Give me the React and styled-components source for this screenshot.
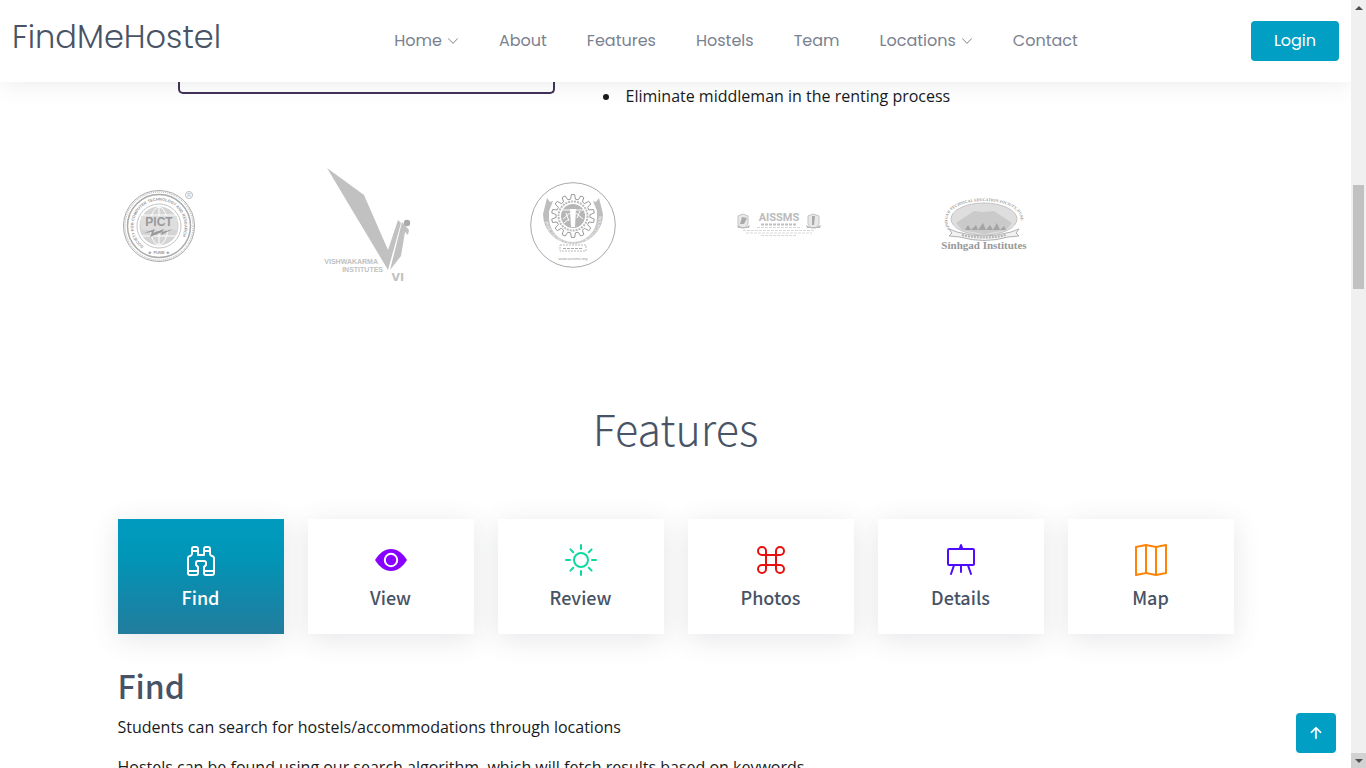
import React from 'react';
import styled, { createGlobalStyle } from 'styled-components';
import {
  BsArrowUpShort,
  BsBinoculars,
  BsBrightnessHigh,
  BsChevronDown,
  BsCommand,
  BsEasel,
  BsMap,
} from 'react-icons/bs';

const brand = '#009fc3';
const heading = '#485366';
const display = '"Poppins", "Inter", "Liberation Sans", sans-serif';
const title = '"Noto Sans CJK SC", "Open Sans", sans-serif';

const GlobalStyle = createGlobalStyle`
  *, *::before, *::after { box-sizing: border-box; }
  body {
    margin: 0;
    background: #fff;
    color: #181a1d;
    font: 400 16px/24px "Open Sans", "Noto Sans", sans-serif;
  }
`;

const Screen = styled.div`
  display: flex;
  height: 100vh;
  overflow: hidden;
`;

const Page = styled.div`
  position: relative;
  flex: 1;
  min-width: 0;
  overflow: hidden;
`;

const Header = styled.header`
  position: relative;
  z-index: 2;
  display: flex;
  align-items: center;
  justify-content: space-between;
  height: 82px;
  padding: 0 12px;
  background: #fff;
  box-shadow: 0 0 24px rgba(72, 86, 84, 0.12);
  font-family: ${display};
`;

const Brand = styled.a`
  padding-bottom: 8px;
  color: ${heading};
  font-size: 32px;
  font-weight: 300;
  line-height: 40px;
  text-decoration: none;
`;

const Nav = styled.nav`
  display: flex;
  gap: 40px;
`;

const NavLink = styled.a`
  display: flex;
  align-items: center;
  gap: 5px;
  color: #7a8290;
  text-decoration: none;
`;

const LoginButton = styled.button`
  width: 88px;
  height: 40px;
  border: 0;
  border-radius: 4px;
  background: ${brand};
  color: #fff;
  font: inherit;
`;

const Container = styled.div`
  max-width: 1140px;
  margin: 0 auto;
  padding: 0 12px;
`;

const About = styled.section`
  display: flex;
  align-items: flex-start;
  gap: 39px;
  padding-left: 60px;
`;

const AboutFrame = styled.div`
  width: 377px;
  height: 12px;
  border: 2px solid #41305a;
  border-top: 0;
  border-radius: 0 0 5px 5px;
`;

const AboutList = styled.ul`
  margin: 0;
  padding: 2px 0 0 27px;

  li { padding-left: 5px; }
`;

const Clients = styled.section`
  display: flex;
  align-items: center;
  gap: 120px;
  padding: 60px 0 117px;
`;

const ClientLogo = styled.svg`
  flex: none;
  overflow: visible;
`;

const SectionTitle = styled.h2`
  margin: 0;
  color: ${heading};
  font: 300 43px/58px ${title};
  text-align: center;
`;

const Tabs = styled.div`
  display: grid;
  grid-template-columns: repeat(6, 1fr);
  gap: 24px;
  padding-top: 63px;
`;

const Tab = styled.button`
  display: flex;
  flex-direction: column;
  align-items: center;
  gap: 9px;
  height: 115px;
  padding: 25px 0 0;
  border: 0;
  background: ${(p) => (p.$active ? 'linear-gradient(180deg, #009bbf 0%, #0096b8 30%, #227c9d 100%)' : '#fff')};
  box-shadow: 0 5px 26px rgba(68, 80, 94, 0.14);
  color: ${(p) => (p.$active ? '#fff' : heading)};
  font: 500 18px/24px ${title};

  svg { color: ${(p) => p.$tint}; }
`;

const Panel = styled.article`
  padding-top: 31px;

  h3 {
    margin: 0;
    color: ${heading};
    font: 500 32px/40px ${title};
  }

  p { margin: 10px 0 16px; }
`;

const BackToTop = styled.button`
  position: absolute;
  right: 15px;
  bottom: 15px;
  z-index: 3;
  display: grid;
  place-items: center;
  width: 40px;
  height: 40px;
  padding: 0;
  border: 0;
  border-radius: 4px;
  background: ${brand};
  color: #fff;
`;

const ScrollBar = styled.div`
  display: flex;
  flex-direction: column;
  width: 15px;
  background: #f0f0f0;
`;

const ScrollArrow = styled.div`
  display: grid;
  place-items: center;
  height: 15px;
  background: ${(p) => (p.$shaded ? '#d2d2d2' : 'transparent')};
`;

const ScrollTrack = styled.div`
  flex: 1;
  padding: 170px 2px 0;
`;

const ScrollThumb = styled.div`
  height: 104px;
  background: #c1c1c1;
`;

function EyeIcon({ size }) {
  return (
    <svg width={size} height={size} viewBox="0 0 32 32" aria-hidden="true">
      <path d="M0 16C4 9.500 9.500 5 16 5s12 4.500 16 11c-4 6.500-9.500 11-16 11S4 22.500 0 16z" fill="currentColor" />
      <circle cx="16" cy="16" r="6.200" fill="none" stroke="#fff" strokeWidth="2" />
    </svg>
  );
}

const links = [
  { label: 'Home', menu: true },
  { label: 'About' },
  { label: 'Features' },
  { label: 'Hostels' },
  { label: 'Team' },
  { label: 'Locations', menu: true },
  { label: 'Contact' },
];

const features = [
  { label: 'Find', icon: BsBinoculars, tint: '#fff' },
  { label: 'View', icon: EyeIcon, tint: '#8800ff' },
  { label: 'Review', icon: BsBrightnessHigh, tint: '#0dd9a0' },
  { label: 'Photos', icon: BsCommand, tint: '#e80f0f' },
  { label: 'Details', icon: BsEasel, tint: '#4f0bff' },
  { label: 'Map', icon: BsMap, tint: '#ff8307' },
];

const sans = 'Liberation Sans, sans-serif';

function PictLogo() {
  return (
    <ClientLogo width="86" height="86" viewBox="0 0 86 86" role="img" aria-label="PICT">
      <defs>
        <path id="pict-ring" d="M25.700 64.400A25.500 25.500 0 1 1 56.300 64.400" />
      </defs>
      <g fill="none" stroke="#aaa">
        <circle cx="41" cy="44" r="35.500" strokeWidth="1" />
        <circle cx="41" cy="44" r="34" strokeWidth="1" strokeDasharray="1 1" />
        <circle cx="41" cy="44" r="31.500" strokeWidth="1.500" />
        <circle cx="41" cy="44" r="22" stroke="#c4c4c4" />
        <circle cx="71" cy="13" r="3.500" stroke="#bbb" />
      </g>
      <circle cx="41" cy="44" r="19.500" fill="#d4d4d4" />
      <g fill="none" stroke="#fff">
        <ellipse cx="41" cy="44" rx="9" ry="19" />
        <path d="M41 24v39M24 33h34M24 54h34" />
      </g>
      <path d="M23 34h36v14H23z" fill="#dedede" />
      <text x="41" y="44" textAnchor="middle" fontFamily={sans} fontSize="12" fontWeight="700" fill="#999">PICT</text>
      <path d="M26 51l11-4-2 4 11-4-2 3 11-3-12 6 1-3-12 5 2-5z" fill="#999" />
      <text fontFamily={sans} fontSize="4" fontWeight="700" fill="#999">
        <textPath href="#pict-ring">SOCIETY FOR COMPUTER TECHNOLOGY AND RESEARCH</textPath>
      </text>
      <text x="41" y="72" textAnchor="middle" fontFamily={sans} fontSize="4" fontWeight="700" fill="#999">★ PUNE ★</text>
      <text x="71" y="15" textAnchor="middle" fontFamily={sans} fontSize="5" fill="#aaa">R</text>
    </ClientLogo>
  );
}

function VishwakarmaLogo() {
  return (
    <ClientLogo width="86" height="113" viewBox="0 0 86 113" role="img" aria-label="Vishwakarma Institutes" fill="#c1c1c1">
      <path d="M3 0l37 27 24 55 10-30 3 3-13 47z" />
      <path d="M78 54l7 8-1 5-3-3-4 24-11 14z" />
      <circle cx="83" cy="55" r="3.200" fill="#aaa" />
      <g fontFamily={sans} fontWeight="700" textAnchor="end">
        <text x="54" y="96" fontSize="7">VISHWAKARMA</text>
        <text x="59" y="104" fontSize="7">INSTITUTES</text>
        <text x="80" y="113" fontFamily="DejaVu Sans, sans-serif" fontSize="11">VI</text>
      </g>
    </ClientLogo>
  );
}

const teeth = Array.from({ length: 14 }, (_, i) => {
  const base = (i * 2 * Math.PI) / 14 - Math.PI / 2;
  return [[-0.14, 17], [-0.08, 21.5], [0.08, 21.5], [0.14, 17]]
    .map(([turn, r]) => `${43 + r * Math.cos(base + turn)},${34 + r * Math.sin(base + turn)}`)
    .join(' ');
}).join(' ');

function GearLogo() {
  return (
    <ClientLogo width="86" height="86" viewBox="0 0 86 86" role="img" aria-label="Engineering college">
      <defs>
        <path id="gear-band" d="M14.500 34A28.500 28.500 0 0 0 71.500 34" />
      </defs>
      <circle cx="43" cy="43" r="42.300" fill="none" stroke="#aaa" />
      <path d="M13 32l4-16 3 4 3-1-4 10 0 7a24 24 0 0 0 48 0l0-7-4-10 3 1 3-4 4 16a30 30 0 0 1-60 0z" fill="#bdbdbd" />
      <polygon points={teeth} fill="#fff" stroke="#999" />
      <circle cx="43" cy="34" r="14.500" fill="none" stroke="#bbb" strokeDasharray="2 1" strokeWidth="2" />
      <circle cx="43" cy="34" r="12" fill="#b6b6b6" />
      <path d="M32 28h8M46 28h8M33 37l7-6M53 37l-7-6M34 41l5-4M36 31l3 8M50 29l-3 7" stroke="#fff" />
      <path d="M40 27h6l-1 18h-4z" fill="#fff" />
      <text fontFamily={sans} fontSize="4" fill="#fff">
        <textPath href="#gear-band" startOffset="6">PUNE DISTRICT EDUCATION ASSOCIATION</textPath>
      </text>
      <path d="M30 63h26v6H30z" fill="#fff" stroke="#bbb" strokeDasharray="2 1" />
      <path d="M33 66.500h20" stroke="#aaa" strokeDasharray="3 1" />
      <text x="43" y="77.500" textAnchor="middle" fontFamily={sans} fontSize="4" fill="#999">www.aissms.org</text>
    </ClientLogo>
  );
}

function AissmsLogo() {
  return (
    <ClientLogo width="86" height="28" viewBox="0 0 86 28" role="img" aria-label="AISSMS">
      <g fill="#e8e8e8" stroke="#c4c4c4">
        <path d="M2 5l5-2 5 2v8l-3 4H5l-3-4z" />
        <path d="M72 5l5-2 6 2v8l-3 4h-5l-3-4z" />
      </g>
      <path d="M1 14l4 2h5l4-2-1 3H2zM70 14l4 2h6l5-2-1 3H71z" fill="#bbb" />
      <path d="M6 6l5 1-3 6H4zM76 5h3l-1 9h-2z" fill="#aaa" />
      <text x="43" y="10" textAnchor="middle" fontFamily="Roboto, sans-serif" fontSize="11" fontWeight="700" fill="#bbb">AISSMS</text>
      <path d="M25 13.500h36" stroke="#bfbfbf" strokeWidth="2" strokeDasharray="3 1" />
      <path d="M21 16.500h44M7 19.500h71M10 22h66M25 24.500h36" stroke="#d8d8d8" strokeDasharray="3 1" />
    </ClientLogo>
  );
}

function SinhgadLogo() {
  return (
    <ClientLogo width="86" height="56" viewBox="0 0 86 56" role="img" aria-label="Sinhgad Institutes">
      <defs>
        <path id="sinhgad-arch" d="M8 32C-2 14 18 4 42 4s44 10 34 28" />
      </defs>
      <ellipse cx="42" cy="22" rx="33" ry="16" fill="#dedede" stroke="#c4c4c4" />
      <path d="M14 26l18-12 8 1 12-1 18 12-6 7-22 4-22-4z" fill="#cacaca" />
      <path d="M23 33l3-5 3 5 5-5 2 5 5-7 3 7 4-5 3 5 4-7 3 7 4-4 2 4z" fill="#a4a4a4" />
      <text fontFamily="Liberation Serif, serif" fontSize="4" fontWeight="700" fill="#999">
        <textPath href="#sinhgad-arch">SINHGAD TECHNICAL EDUCATION SOCIETY, PUNE</textPath>
      </text>
      <path d="M7 32l8 3q27 8 54 0l8-3-3 4 3 3-11 1q-24 7-48 0l-11-1 3-3z" fill="#f2f2f2" stroke="#b0b0b0" />
      <path d="M20 38q22 5 44 0" fill="none" stroke="#b4b4b4" strokeWidth="2" strokeDasharray="2 1" />
      <text x="42" y="52" textAnchor="middle" fontFamily="Liberation Serif, serif" fontSize="11" fontWeight="700" fill="#999">Sinhgad Institutes</text>
    </ClientLogo>
  );
}

export default function App() {
  return (
    <Screen>
      <GlobalStyle />
      <Page>
        <Header>
          <Brand href="#home">FindMeHostel</Brand>
          <Nav>
            {links.map(({ label, menu }) => (
              <NavLink key={label} href={`#${label.toLowerCase()}`}>
                {label}
                {menu && <BsChevronDown size={12} />}
              </NavLink>
            ))}
          </Nav>
          <LoginButton type="button">Login</LoginButton>
        </Header>
        <Container as="main">
          <About>
            <AboutFrame />
            <AboutList>
              <li>Eliminate middleman in the renting process</li>
            </AboutList>
          </About>
          <Clients>
            <PictLogo />
            <VishwakarmaLogo />
            <GearLogo />
            <AissmsLogo />
            <SinhgadLogo />
          </Clients>
          <SectionTitle>Features</SectionTitle>
          <Tabs>
            {features.map(({ label, icon: Icon, tint }, i) => (
              <Tab key={label} type="button" $active={i === 0} $tint={tint}>
                <Icon size={32} />
                {label}
              </Tab>
            ))}
          </Tabs>
          <Panel>
            <h3>Find</h3>
            <p>Students can search for hostels/accommodations through locations</p>
            <p>Hostels can be found using our search algorithm, which will fetch results based on keywords.</p>
          </Panel>
        </Container>
        <BackToTop type="button" aria-label="Back to top">
          <BsArrowUpShort size={24} strokeWidth="0.2" />
        </BackToTop>
      </Page>
      <ScrollBar aria-hidden="true">
        <ScrollArrow>
          <svg width="8" height="4" viewBox="0 0 8 4"><path d="M4 0l4 4H0z" fill="#505050" /></svg>
        </ScrollArrow>
        <ScrollTrack>
          <ScrollThumb />
        </ScrollTrack>
        <ScrollArrow $shaded>
          <svg width="8" height="4" viewBox="0 0 8 4"><path d="M4 4l4-4H0z" fill="#505050" /></svg>
        </ScrollArrow>
      </ScrollBar>
    </Screen>
  );
}
